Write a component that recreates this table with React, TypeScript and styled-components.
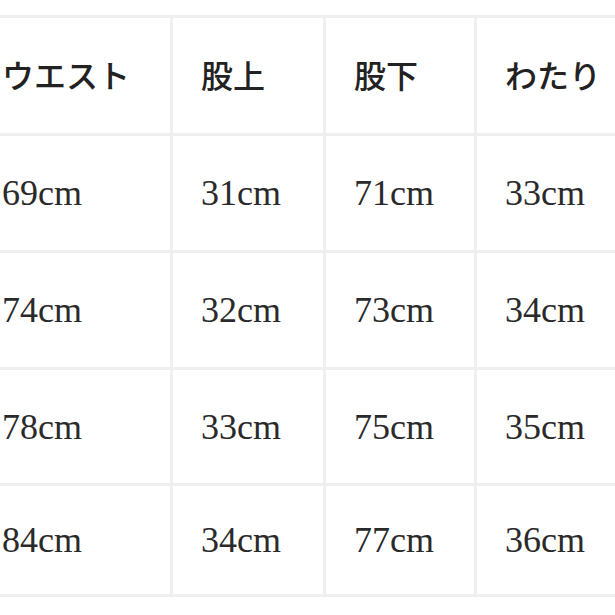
import styled, { createGlobalStyle } from "styled-components";

const GlobalStyle = createGlobalStyle`
  html, body {
    margin: 0;
    padding: 0;
    background: #ffffff;
    overflow: hidden;
  }
`;

const Page = styled.div`
  width: 615px;
  height: 615px;
  overflow: hidden;
  padding-top: 15px;
  box-sizing: border-box;
`;

const Grid = styled.div`
  display: grid;
  grid-template-columns: 196px 150px 148px 200px;
  grid-template-rows: 115px 114px 114px 113px 108px;
  gap: 3px;
  padding: 3px 0;
  margin-left: -26px;
  width: max-content;
  background: #efefef;
`;

const Cell = styled.div<{ $head?: boolean }>`
  background: #ffffff;
  display: flex;
  align-items: center;
  padding-left: 28px;
  padding-bottom: ${(p) => (p.$head ? "4px" : "0")};
  color: ${(p) => (p.$head ? "#222222" : "#2a2a2a")};
  font-family: ${(p) =>
    p.$head
      ? '"Noto Sans CJK JP", sans-serif'
      : '"Liberation Serif", "Noto Sans CJK JP", serif'};
  font-size: ${(p) => (p.$head ? "32px" : "36px")};
  font-weight: ${(p) => (p.$head ? 500 : 400)};
  white-space: nowrap;
`;

const headers = ["ウエスト", "股上", "股下", "わたり"];

const rows = [
  ["69cm", "31cm", "71cm", "33cm"],
  ["74cm", "32cm", "73cm", "34cm"],
  ["78cm", "33cm", "75cm", "35cm"],
  ["84cm", "34cm", "77cm", "36cm"],
];

const App = () => {
  return (
    <>
      <GlobalStyle />
      <Page>
        <Grid>
          {headers.map((h) => (
            <Cell key={h} $head>
              {h}
            </Cell>
          ))}
          {rows.map((row, i) =>
            row.map((v, j) => <Cell key={`${i}-${j}`}>{v}</Cell>)
          )}
        </Grid>
      </Page>
    </>
  );
};

export default App;
